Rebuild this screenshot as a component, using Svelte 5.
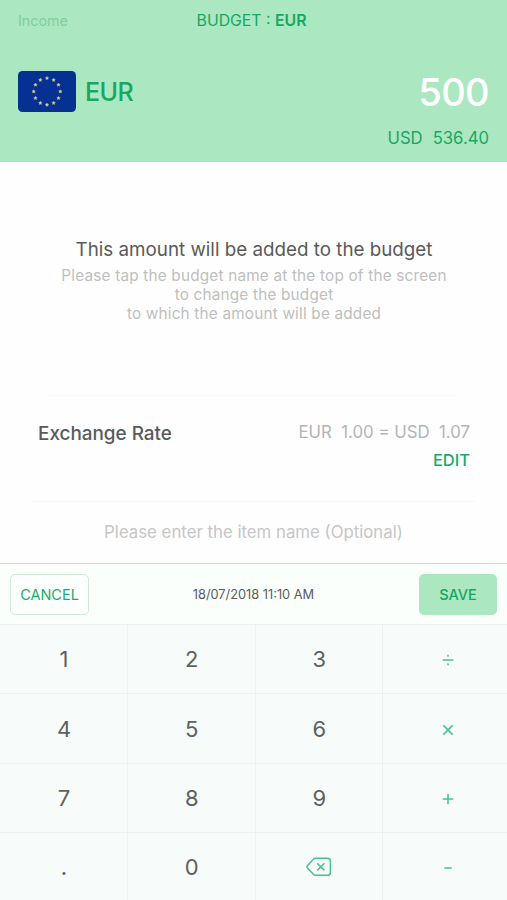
<script lang="ts">
	type Key = { id: string; kind: 'digit' | 'op' | 'back' };

	const keys: Key[] = [
		{ id: '1', kind: 'digit' },
		{ id: '2', kind: 'digit' },
		{ id: '3', kind: 'digit' },
		{ id: '÷', kind: 'op' },
		{ id: '4', kind: 'digit' },
		{ id: '5', kind: 'digit' },
		{ id: '6', kind: 'digit' },
		{ id: '×', kind: 'op' },
		{ id: '7', kind: 'digit' },
		{ id: '8', kind: 'digit' },
		{ id: '9', kind: 'digit' },
		{ id: '+', kind: 'op' },
		{ id: '.', kind: 'digit' },
		{ id: '0', kind: 'digit' },
		{ id: 'backspace', kind: 'back' },
		{ id: '-', kind: 'op' }
	];

	// icon strokes for the operator keys, on a 12x12 grid
	const opPaths: Record<string, string> = {
		'÷': 'M0.7 6H11.3M6 0.8V2.8M6 9.2V11.2',
		'×': 'M1.4 1.4L10.6 10.6M10.6 1.4L1.4 10.6',
		'+': 'M0.7 6H11.3M6 0.7V11.3',
		'-': 'M2.3 6H9.7'
	};

	const stars = Array.from({ length: 12 }, (_, i) => {
		const a = (i * Math.PI) / 6;
		return { x: 29 + 13.3 * Math.sin(a), y: 20.4 - 13.3 * Math.cos(a) };
	});

	let amount = $state('500');

	function press(key: Key) {
		if (key.kind === 'back') {
			amount = amount.slice(0, -1) || '0';
		} else if (key.kind === 'digit') {
			amount = amount === '0' && key.id !== '.' ? key.id : amount + key.id;
		}
	}

	let converted = $derived((Number(amount) * 1.0728).toFixed(2));
</script>

<div class="screen">
	<header class="header">
		<div class="topbar">
			<span class="income">Income</span>
			<span class="budget">BUDGET : <strong>EUR</strong></span>
			<span></span>
		</div>
		<div class="amount-row">
			<svg class="flag" width="58" height="41" viewBox="0 0 58 41" aria-hidden="true">
				<rect width="58" height="41" rx="4.5" fill="#063193" />
				{#each stars as star}
					<path
						d="M0-1.7L.6-.6 1.7-.5 .9.4 1.1 1.5 0 1-1.1 1.5-.9.4-1.7-.5-.6-.6Z"
						transform="translate({star.x} {star.y})"
						fill="#d6c98a"
						stroke="#d6c98a"
						stroke-width="0.4"
					/>
				{/each}
			</svg>
			<span class="currency">EUR</span>
			<span class="amount">{amount}</span>
		</div>
		<div class="converted"><span>USD</span><span>{converted}</span></div>
	</header>

	<main class="content">
		<section class="notice">
			<h1>This amount will be added to the budget</h1>
			<p>
				Please tap the budget name at the top of the screen<br />
				to change the budget<br />
				to which the amount will be added
			</p>
		</section>

		<section class="rate">
			<h2>Exchange Rate</h2>
			<div class="rate-detail">
				<span class="rate-value">EUR&nbsp; 1.00 = USD&nbsp; 1.07</span>
				<button class="edit">EDIT</button>
			</div>
		</section>

		<input class="item-name" placeholder="Please enter the item name (Optional)" />
	</main>

	<div class="actions">
		<button class="cancel">CANCEL</button>
		<span class="date">18/07/2018 11:10 AM</span>
		<button class="save">SAVE</button>
	</div>

	<div class="keypad">
		{#each keys as key (key.id)}
			<button class="key" aria-label={key.id} onclick={() => press(key)}>
				{#if key.kind === 'digit'}
					{key.id}
				{:else if key.kind === 'op'}
					<svg class="op" width="12" height="12" viewBox="0 0 12 12">
						<path d={opPaths[key.id]} />
					</svg>
				{:else}
					<svg class="back" width="26" height="20" viewBox="0 0 26 20">
						<path d="M9.4 1.2H21.5Q24.4 1.2 24.4 4.1V15.4Q24.4 18.3 21.5 18.3H9.4Q8.4 18.3 7.6 17.5L1.6 11.1Q0.3 9.75 1.6 8.4L7.6 2Q8.4 1.2 9.4 1.2Z" />
						<path d="M11.2 6.2L18.4 13.4M18.4 6.2L11.2 13.4" />
					</svg>
				{/if}
			</button>
		{/each}
	</div>
</div>

<style>
	:global(body) {
		margin: 0;
		background: #fefefe;
	}

	.screen {
		width: 507px;
		height: 900px;
		display: flex;
		flex-direction: column;
		overflow: hidden;
		background: #fefefe;
		font-family: Inter, 'Liberation Sans', sans-serif;
		color: #5a5a5a;
	}

	button {
		font: inherit;
		margin: 0;
		padding: 0;
		border: 0;
		background: none;
		box-sizing: border-box;
	}

	.header {
		height: 162px;
		flex: none;
		box-sizing: border-box;
		padding: 0 18px;
		background: #abe7c0;
		color: #17a863;
	}

	.topbar {
		display: grid;
		grid-template-columns: 1fr auto 1fr;
		align-items: center;
		height: 40px;
		margin-right: 4px;
		font-size: 15.8px;
	}

	.income {
		color: #82cda2;
		font-size: 14.3px;
	}

	.budget strong {
		font-weight: 600;
	}

	.amount-row {
		display: flex;
		align-items: center;
		height: 46px;
		margin-top: 28px;
	}

	.flag {
		flex: none;
	}

	.currency {
		margin-left: 9px;
		padding-top: 1px;
		font-size: 25px;
		font-weight: 500;
		letter-spacing: -0.5px;
	}

	.amount {
		margin-left: auto;
		padding-top: 1px;
		font-size: 38px;
		font-weight: 500;
		letter-spacing: -0.6px;
		color: #fff;
	}

	.converted {
		display: flex;
		justify-content: flex-end;
		gap: 10px;
		margin-top: 14px;
		line-height: 21px;
		font-size: 16.7px;
	}

	.content {
		display: flex;
		flex-direction: column;
		height: 401px;
		flex: none;
	}

	.notice {
		height: 234px;
		flex: none;
		box-sizing: border-box;
		padding: 74px 0 0 1px;
		margin: 0 48px;
		border-bottom: 1px solid #fafafa;
		text-align: center;
		white-space: nowrap;
	}

	h1 {
		margin: 0;
		line-height: 27px;
		font-size: 18.8px;
		font-weight: 400;
	}

	.notice p {
		margin: 3px 0 0;
		line-height: 19px;
		font-size: 15.3px;
		letter-spacing: 0.2px;
		color: #bebebe;
	}

	.rate {
		display: flex;
		justify-content: space-between;
		height: 106px;
		box-sizing: border-box;
		margin: 0 32px;
		padding: 25px 5px 0 6px;
		border-bottom: 1px solid #f7f7f7;
	}

	h2 {
		margin: 0;
		line-height: 26px;
		font-size: 18.9px;
		font-weight: 500;
	}

	.rate-detail {
		display: flex;
		flex-direction: column;
		align-items: flex-end;
	}

	.rate-value {
		line-height: 22px;
		font-size: 16.8px;
		color: #b4b4b4;
	}

	.edit {
		margin-top: 6px;
		line-height: 22px;
		font-size: 16.5px;
		font-weight: 500;
		color: #18aa68;
	}

	.item-name {
		flex: 1;
		border: 0;
		padding: 0 0 2px;
		background: none;
		text-align: center;
		font: 400 16.8px Inter, 'Liberation Sans', sans-serif;
		outline: none;
	}

	.item-name::placeholder {
		color: #c6c6c6;
	}

	.actions {
		display: grid;
		grid-template-columns: 1fr auto 1fr;
		align-items: center;
		height: 61px;
		flex: none;
		box-sizing: border-box;
		padding: 0 10px;
		border-top: 1px solid #b9e2cf;
		background: #fafffc;
	}

	.cancel {
		width: 79px;
		height: 41px;
		border: 1px solid #cfe9dc;
		border-radius: 5px;
		background: #fdfffe;
		font-size: 14.5px;
		color: #16ad69;
	}

	.date {
		font-size: 12.8px;
	}

	.save {
		justify-self: end;
		width: 78px;
		height: 41px;
		border-radius: 5px;
		background: #abe7c1;
		font-size: 14.5px;
		font-weight: 500;
		color: #14a75e;
	}

	.keypad {
		display: grid;
		grid-template-columns: 128px repeat(3, 127.6px);
		grid-auto-rows: 69.4px;
		flex: none;
		background: #f7fbfa;
	}

	.key {
		display: flex;
		align-items: center;
		justify-content: center;
		padding-left: 1px;
		border-top: 1px solid #edf1ef;
		border-right: 1px solid #eef2f0;
		font-size: 22px;
		color: #5d6160;
	}

	.key svg {
		fill: none;
		stroke: #45c28e;
		stroke-width: 1.5;
	}

	.op {
		margin: 2px 0 0 2px;
	}

	.back {
		stroke-linejoin: round;
	}
</style>
